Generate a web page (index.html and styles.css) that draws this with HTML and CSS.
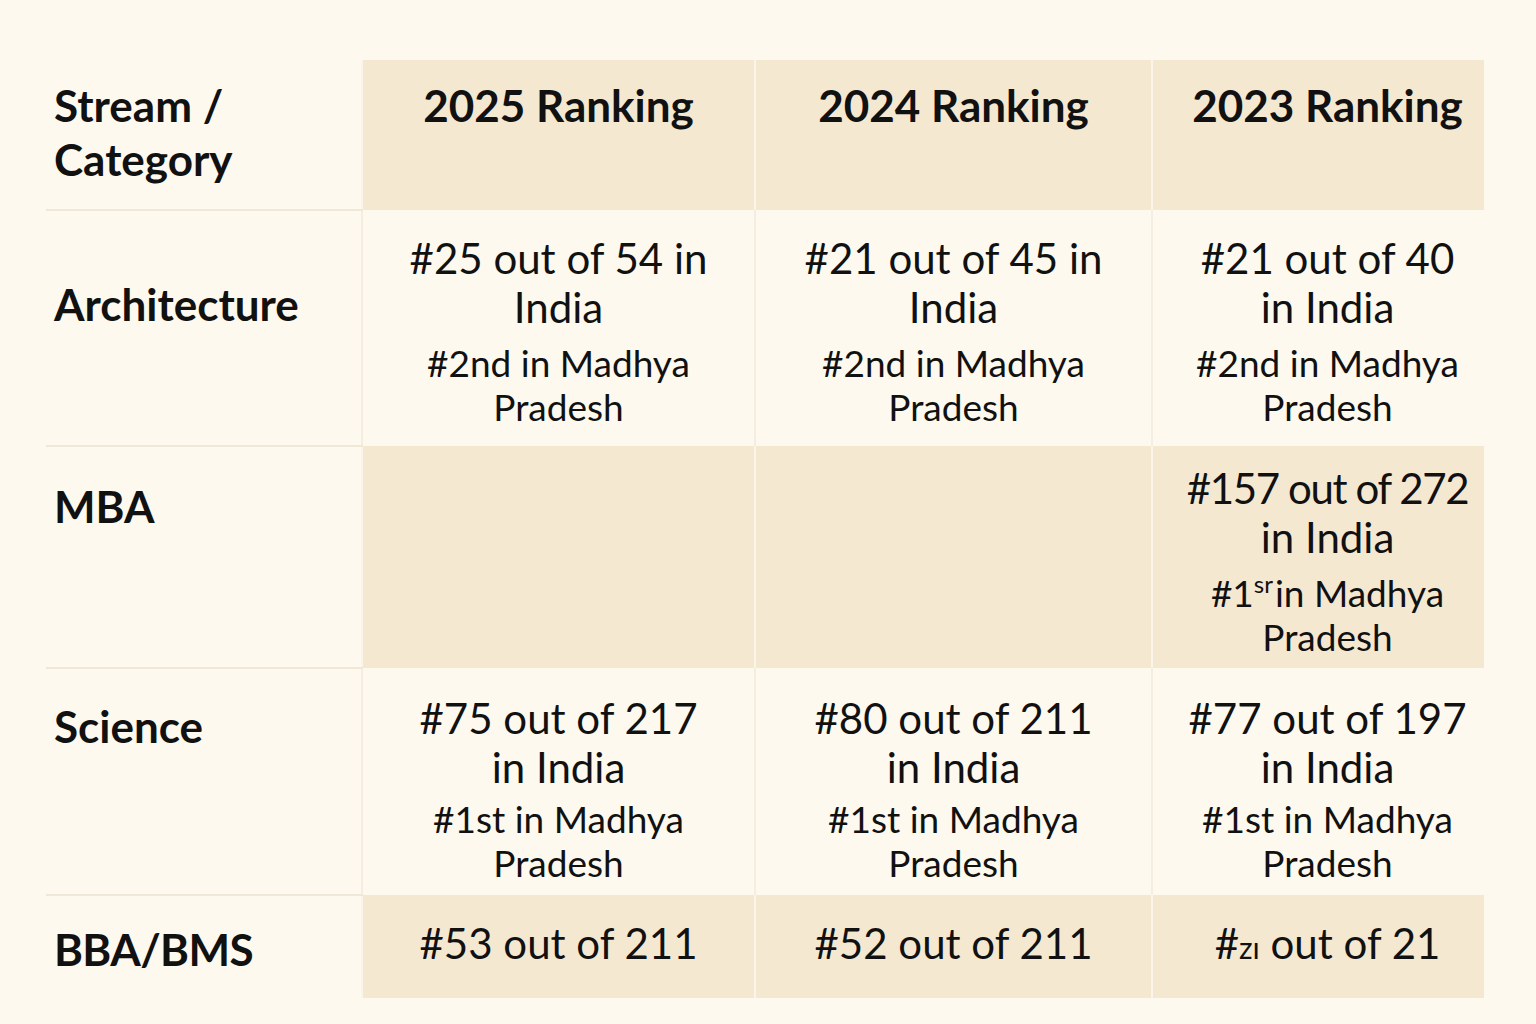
FILE: index.html
```html
<!DOCTYPE html>
<html lang="en">
<head>
<meta charset="utf-8">
<title>Rankings</title>
<link rel="stylesheet" href="styles.css">
</head>
<body>
<main class="page">
  <table class="rank">
    <colgroup>
      <col class="c1"><col class="c2"><col class="c3"><col class="c4">
    </colgroup>
    <tr class="r-head">
      <th class="label">Stream /<br>Category</th>
      <th class="head y25">2025 Ranking</th>
      <th class="head y24">2024 Ranking</th>
      <th class="head y23">2023 Ranking</th>
    </tr>
    <tr class="r-arch">
      <td class="label">Architecture</td>
      <td class="data y25"><div class="main">#25 out of 54 in<br>India</div><div class="sub">#2nd in Madhya<br>Pradesh</div></td>
      <td class="data y24"><div class="main">#21 out of 45 in<br>India</div><div class="sub">#2nd in Madhya<br>Pradesh</div></td>
      <td class="data y23"><div class="main">#21 out of 40<br>in India</div><div class="sub">#2nd in Madhya<br>Pradesh</div></td>
    </tr>
    <tr class="r-mba shaded">
      <td class="label">MBA</td>
      <td class="data y25"></td>
      <td class="data y24"></td>
      <td class="data y23"><div class="main"><span class="tight">#157 out of 272</span><br>in India</div><div class="sub">#1<sup class="odd">sr</sup>in Madhya<br>Pradesh</div></td>
    </tr>
    <tr class="r-sci">
      <td class="label">Science</td>
      <td class="data y25"><div class="main">#75 out of 217<br>in India</div><div class="sub">#1st in Madhya<br>Pradesh</div></td>
      <td class="data y24"><div class="main">#80 out of 211<br>in India</div><div class="sub">#1st in Madhya<br>Pradesh</div></td>
      <td class="data y23"><div class="main">#77 out of 197<br>in India</div><div class="sub">#1st in Madhya<br>Pradesh</div></td>
    </tr>
    <tr class="r-bba shaded">
      <td class="label">BBA/BMS</td>
      <td class="data y25"><div class="main">#53 out of 211</div></td>
      <td class="data y24"><div class="main">#52 out of 211</div></td>
      <td class="data y23"><div class="main">#<span class="small">zı</span> out of 21</div></td>
    </tr>
  </table>
</main>
</body>
</html>
```
FILE: styles.css
```css
html, body {
  margin: 0;
  padding: 0;
  background: #fdf9ee;
}
body {
  font-family: Lato, "Noto Sans", sans-serif;
  color: #111;
  width: 1536px;
  height: 1024px;
  overflow: hidden;
}
.page {
  padding: 60px 0 0 46px;
}
.rank {
  border-collapse: collapse;
  table-layout: fixed;
  width: 1438px;
}
.c1 { width: 316px; }
.c2 { width: 393px; }
.c3 { width: 397px; }
.c4 { width: 332px; }

.rank th, .rank td {
  padding: 0;
  vertical-align: top;
  text-align: center;
}
.rank .y23 { padding-left: 18px; }

.label {
  text-align: left !important;
  padding-left: 8px !important;
  font-size: 44px;
  font-weight: 700;
  line-height: 54px;
  border-bottom: 2px solid #f0e8d7;
}
.r-bba .label { border-bottom: none; letter-spacing: -0.6px; }

.head {
  background: #f5e8d1;
  font-size: 44px;
  font-weight: 700;
  line-height: 54px;
  border-left: 2px solid #fbf5e9;
}
.r-head { height: 150px; }
.r-head th { padding-top: 18px; }

.data {
  border-left: 2px solid #f4ede0;
}
.shaded .data {
  background: #f5e8d1;
  border-left-color: #fbf5e9;
}

.main {
  font-size: 42px;
  line-height: 49px;
}
.tight {
  letter-spacing: -1.4px;
}
.sub {
  font-size: 37px;
  line-height: 44px;
  margin-top: 9px;
}
.odd {
  font-size: 24px;
  vertical-align: 14px;
  line-height: 0;
  margin-right: 2px;
}
.small {
  font-size: 30px;
}

.r-arch { height: 236px; }
.r-arch .data { padding-top: 24px; }
.r-arch .label { padding-top: 66px; }

.r-mba { height: 222px; }
.r-mba .data { padding-top: 18px; }
.r-mba .label { padding-top: 32px; }

.r-sci { height: 227px; }
.r-sci .data { padding-top: 26px; }
.r-sci .label { padding-top: 30px; }
.r-sci .sub { margin-top: 5px; }

.r-bba { height: 103px; }
.r-bba .data { padding-top: 24px; }
.r-bba .label { padding-top: 26px; }
```
